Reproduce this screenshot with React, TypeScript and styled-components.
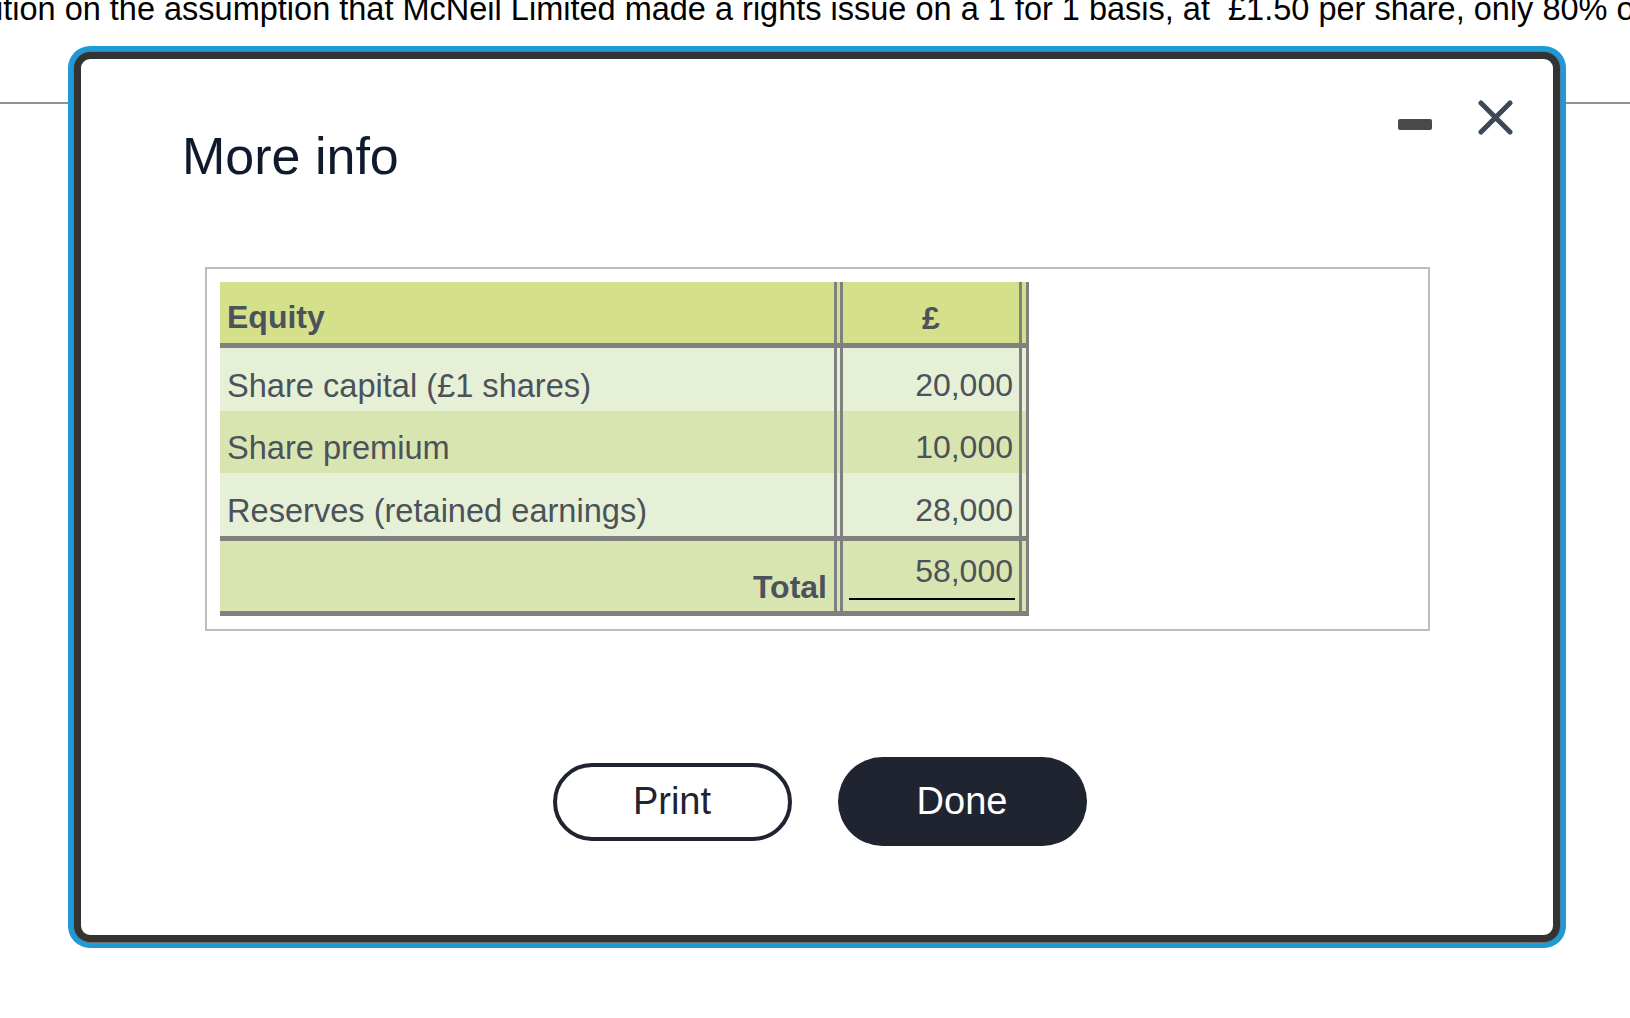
import React from "react";
import styled, { createGlobalStyle } from "styled-components";

const GlobalStyle = createGlobalStyle`
	html, body {
		margin: 0;
		padding: 0;
		background: #fff;
	}
	body {
		font-family: "Liberation Sans", Arial, sans-serif;
		overflow: hidden;
	}
	#root {
		position: relative;
		width: 1630px;
		height: 1018px;
		overflow: hidden;
	}
`;

const rows = [
	{ label: "Share capital (£1 shares)", amount: "20,000", tone: "light", height: 63 },
	{ label: "Share premium", amount: "10,000", tone: "dark", height: 62 },
	{ label: "Reserves (retained earnings)", amount: "28,000", tone: "light", height: 63 },
];

const tones: Record<string, string> = {
	head: "#d4e08a",
	light: "#e6f0d6",
	dark: "#d9e5b0",
};

const App = () => {
	return (
		<>
			<GlobalStyle />
			<Page>
				<Question>
					ition on the assumption that McNeil Limited made a rights issue on a 1 for 1 basis, at{"\u00a0"} £1.50 per share, only 80% of the shares were taken up.
				</Question>
				<Rule />
			</Page>
			<Dialog role="dialog" aria-label="More info">
				<Header>
					<Title>More info</Title>
					<Controls>
						<Minimize aria-label="Minimize" />
						<Close aria-label="Close">
							<svg width="35" height="35" viewBox="0 0 35 35">
								<path
									d="M3 3 L32 32 M32 3 L3 32"
									stroke="#3c4856"
									strokeWidth="5"
									strokeLinecap="round"
									fill="none"
								/>
							</svg>
						</Close>
					</Controls>
				</Header>
				<TableBox>
					<Table>
						<Row $tone="head" $height={66} $bottom={5}>
							<LabelCell $bold>Equity</LabelCell>
							<AmountCell $center $bold $pb={6}>
								£
							</AmountCell>
						</Row>
						{rows.map((row, i) => (
							<Row key={i} $tone={row.tone} $height={row.height}>
								<LabelCell>{row.label}</LabelCell>
								<AmountCell>{row.amount}</AmountCell>
							</Row>
						))}
						<Row $tone="dark" $height={80} $top={5} $bottom={5}>
							<LabelCell $bold $right $pb={5}>
								Total
							</LabelCell>
							<AmountCell $total>
								<Underlined>58,000</Underlined>
							</AmountCell>
						</Row>
					</Table>
				</TableBox>
				<Actions>
					<PrintButton>Print</PrintButton>
					<DoneButton>Done</DoneButton>
				</Actions>
			</Dialog>
		</>
	);
};

export default App;

const Page = styled.div`
	width: 100%;
	height: 100%;
`;

const Question = styled.p`
	margin: -9px 0 0;
	font-size: 32.5px;
	line-height: 37px;
	text-indent: -4px;
	color: #000;
	white-space: nowrap;
	overflow: hidden;
`;

const Rule = styled.div`
	height: 2px;
	margin-top: 74px;
	background: #8a949e;
`;

const Dialog = styled.div`
	position: absolute;
	left: 74px;
	top: 52px;
	width: 1486px;
	height: 890px;
	box-sizing: border-box;
	display: flex;
	flex-direction: column;
	background: #fff;
	border: 7px solid #333;
	border-radius: 16px;
	outline: 1px dotted #6b6b6b;
	box-shadow: 0 0 0 6px #1e9ad6;
`;

const Header = styled.div`
	display: flex;
	justify-content: space-between;
	align-items: flex-start;
	padding: 41px 40px 0 101px;
`;

const Title = styled.h2`
	margin: 26px 0 0;
	font-size: 52px;
	font-weight: 400;
	line-height: 60px;
	color: #0f1b2d;
`;

const Controls = styled.div`
	display: flex;
	align-items: flex-start;
	gap: 46px;
`;

const Minimize = styled.button`
	width: 34px;
	height: 11px;
	margin-top: 19px;
	padding: 0;
	border: 0;
	border-radius: 2px;
	background: #4a4a4a;
	cursor: pointer;
`;

const Close = styled.button`
	width: 35px;
	height: 35px;
	padding: 0;
	border: 0;
	background: none;
	cursor: pointer;
	svg {
		display: block;
	}
`;

const TableBox = styled.div`
	margin: 81px 123px 0 124px;
	padding: 13px 13px;
	border: 2px solid #bdbdbd;
`;

const Table = styled.div`
	width: 809px;
	color: #4b525b;
	font-size: 32px;
	line-height: 37px;
`;

const Row = styled.div<{ $tone: string; $height: number; $top?: number; $bottom?: number }>`
	display: flex;
	box-sizing: border-box;
	height: ${(p) => p.$height}px;
	background: ${(p) => tones[p.$tone]};
	border-top: ${(p) => p.$top || 0}px solid #808080;
	border-bottom: ${(p) => p.$bottom || 0}px solid #808080;
`;

const LabelCell = styled.div<{ $bold?: boolean; $right?: boolean; $pb?: number }>`
	width: 623px;
	box-sizing: border-box;
	display: flex;
	align-items: flex-end;
	justify-content: ${(p) => (p.$right ? "flex-end" : "flex-start")};
	padding: 0 7px ${(p) => p.$pb ?? 7}px;
	font-size: ${(p) => (p.$bold ? 32 : 32.6)}px;
	font-weight: ${(p) => (p.$bold ? 700 : 400)};
	border-right: 9px double #808080;
	white-space: nowrap;
`;

const AmountCell = styled.div<{ $center?: boolean; $bold?: boolean; $total?: boolean; $pb?: number }>`
	width: 186px;
	box-sizing: border-box;
	display: flex;
	align-items: flex-end;
	justify-content: ${(p) => (p.$center ? "center" : "flex-end")};
	padding: ${(p) =>
		p.$total ? "0 4px 11px 6px" : p.$center ? `0 0 ${p.$pb}px` : "0 6px 7px 0"};
	font-weight: ${(p) => (p.$bold ? 700 : 400)};
	border-right: 10px double #808080;
`;

const Underlined = styled.span`
	flex: 1;
	text-align: right;
	padding: 0 2px 8px 0;
	border-bottom: 2px solid #000;
`;

const Actions = styled.div`
	display: flex;
	justify-content: center;
	align-items: center;
	gap: 46px;
	margin-top: 126px;
	padding-left: 5px;
`;

const PrintButton = styled.button`
	width: 239px;
	height: 78px;
	box-sizing: border-box;
	border: 4px solid #1f2430;
	border-radius: 40px;
	background: #fff;
	color: #1f2430;
	font-family: inherit;
	font-size: 38px;
	cursor: pointer;
`;

const DoneButton = styled.button`
	width: 249px;
	height: 89px;
	border: 0;
	border-radius: 45px;
	background: #1f2430;
	color: #fff;
	font-family: inherit;
	font-size: 38px;
	cursor: pointer;
`;
